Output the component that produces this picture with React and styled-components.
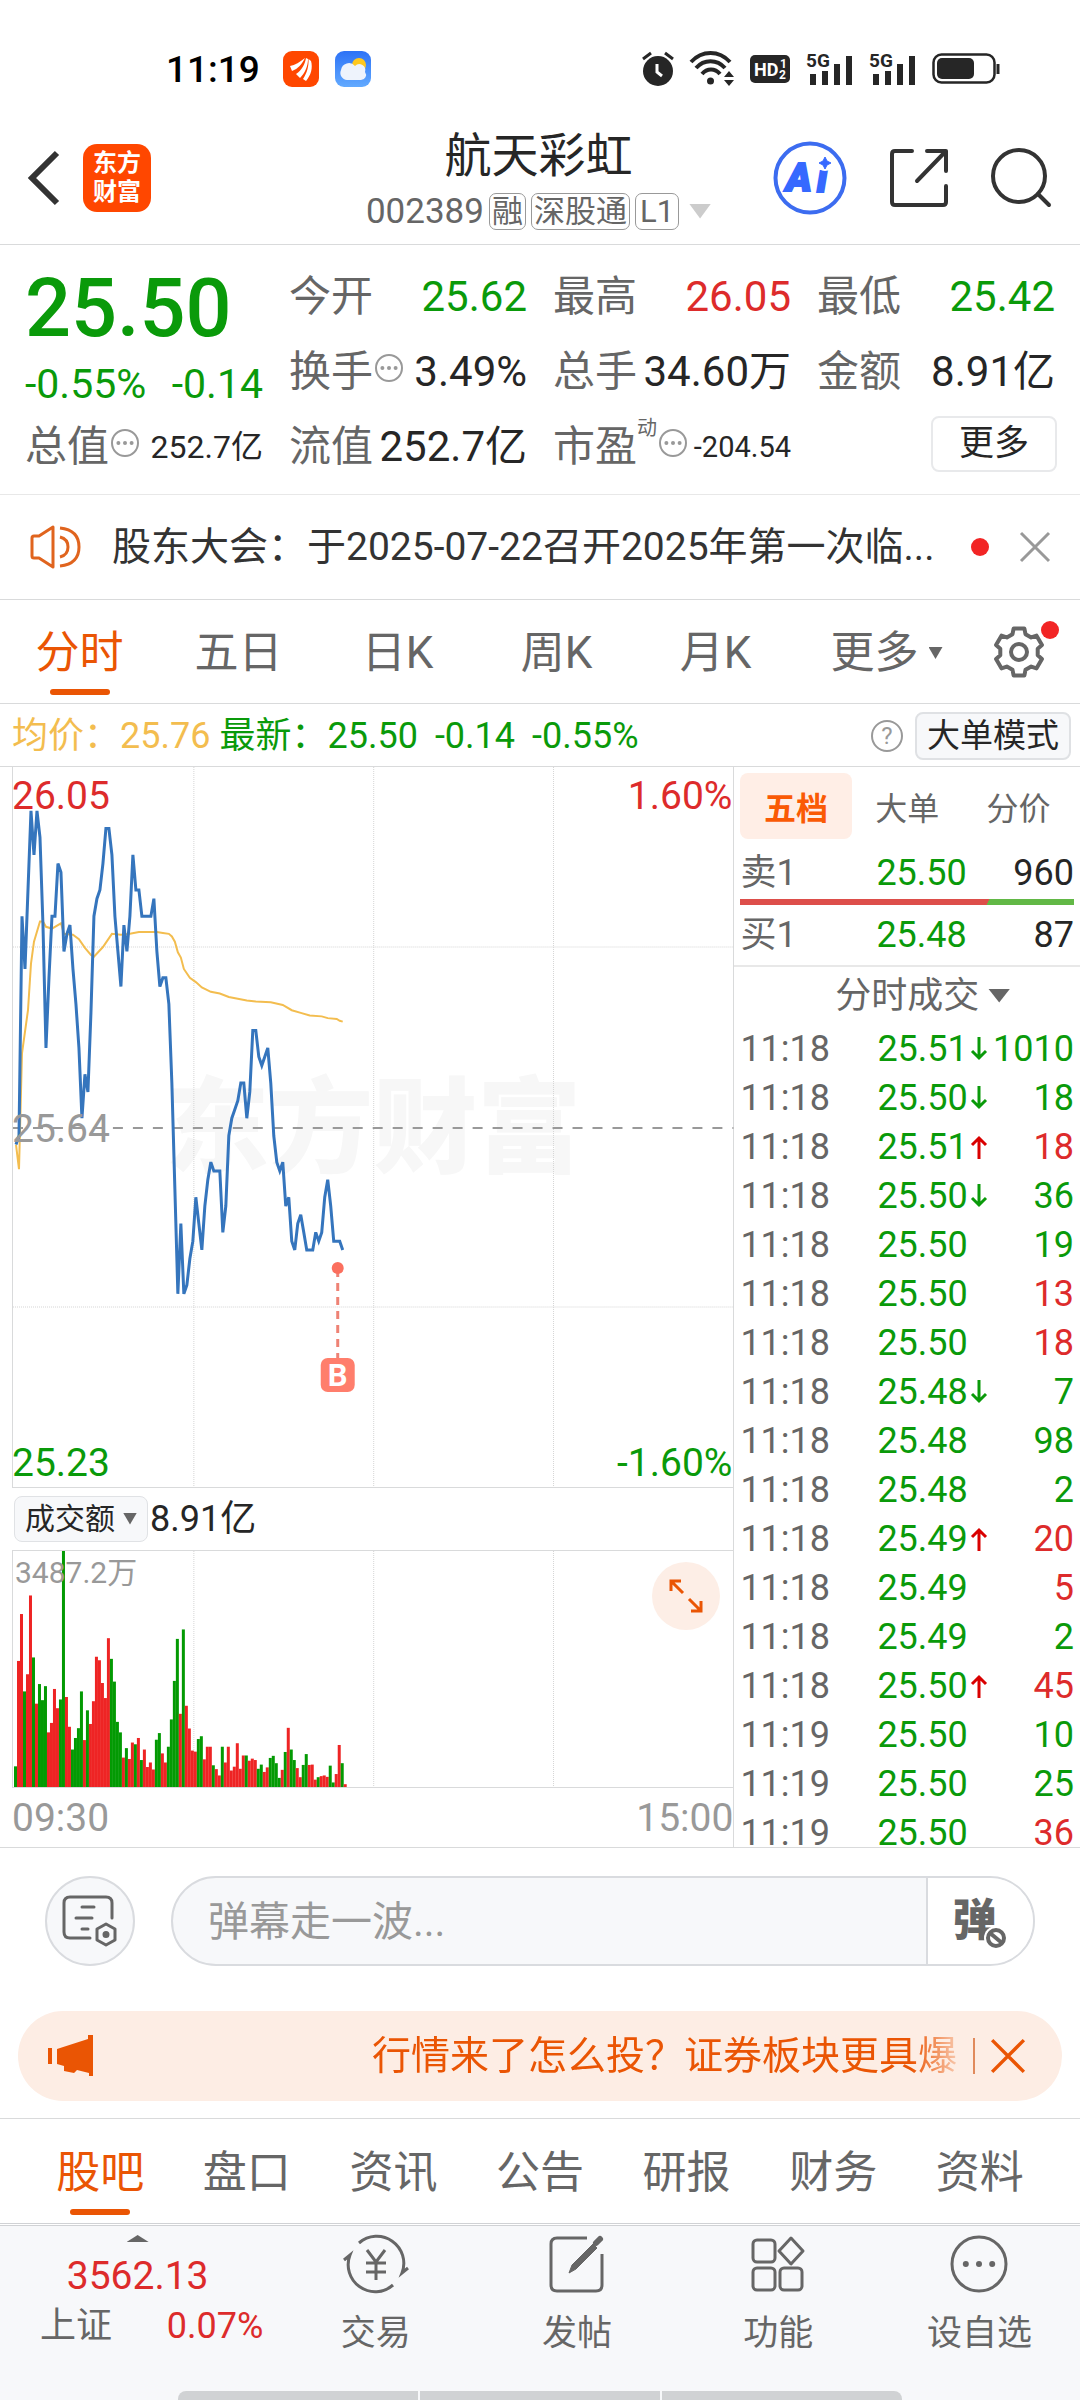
import styled, { createGlobalStyle, css } from "styled-components";

const red = "#dd2b2b";
const green = "#0a9a0a";
const orange = "#ea5504";
const line = "#d9dadb";

// 09:30 - 11:19, distance to the previous close in cents
const prevClose = 25.64;
const prices = [
  -2, -1, 24, 18, 27, 36, 31, 36, 33, 23, 9, 17, 24, 24, 30, 29, 20, 22, 23, 18,
  14, 9, 1, 6, 4, 13, 24, 26, 27, 30, 34, 34, 31, 24, 20, 16, 23, 20, 24, 31,
  27, 27, 24, 24, 24, 24, 26, 20, 16, 17, 17, 14, 5, -7, -19, -11, -19, -18, -15, -13,
  -8, -11, -14, -9, -6, -4, -5, -5, -5, -12, -9, -1, 1, 2, 3, 5, 5, 1, 4, 11,
  11, 8, 7, 8, 9, 5, -1, -4, -5, -4, -9, -8, -13, -14, -11, -10, -12, -14, -14, -14,
  -12, -13, -12, -8, -6, -9, -13, -13, -13, -14,
];

// [minute, cents]
const average = [
  [0, -2], [1, -4.8], [2, 8.4], [4, 13.3], [5, 18.6], [6, 21.1], [8, 23.4], [9, 23.4],
  [10, 22.8], [12, 22.6], [13, 22.8], [15, 23.2], [16, 22], [19, 21.9], [21, 21.4],
  [23, 20.4], [25, 19.6], [26, 19.4], [29, 20.5], [32, 22], [35, 21.9], [38, 22],
  [41, 22.2], [47, 22.2], [49, 22.1], [51, 22], [52, 21.7], [53, 21.1], [54, 19.9],
  [55, 19.3], [56, 18], [58, 17], [60, 16.5], [62, 15.9], [65, 15.4], [68, 15.2],
  [71, 14.8], [74, 14.6], [77, 14.4], [80, 14.3], [85, 14.2], [89, 13.9], [92, 13.3],
  [95, 13], [98, 12.7], [102, 12.6], [104, 12.4], [107, 12.3], [108, 12.1], [109, 12],
];

// r = up, g = down
const volumes =
  "g59 r360 r494 g273 r322 r547 g370 r238 g294 g248 g288 r156 r183 r280 r225 g250 g674 r257 r172 g107 " +
  "g140 g168 g273 r134 g219 r180 r245 r372 r362 r297 r254 r425 g366 g301 g186 g156 r84 g111 r80 r127 " +
  "g122 r140 g77 r107 r57 r70 r50 g135 g154 r96 r70 g115 g193 g303 g423 r209 g450 r232 r167 r104 " +
  "r101 g137 g145 r79 r115 r115 g62 r51 r33 g115 r70 r115 r47 r58 r125 r52 r90 g90 r75 r81 " +
  "r77 g52 g64 r43 r56 g83 g89 g68 g26 r49 g100 r169 g107 g77 r54 r28 g63 g94 r63 r64 " +
  "r21 g28 r31 r33 r29 g61 g13 r37 r120 g68 r8";
const maxVolume = 674;

const trades = [
  ["11:18", "25.51", "down", "1010", "g"],
  ["11:18", "25.50", "down", "18", "g"],
  ["11:18", "25.51", "up", "18", "r"],
  ["11:18", "25.50", "down", "36", "g"],
  ["11:18", "25.50", "", "19", "g"],
  ["11:18", "25.50", "", "13", "r"],
  ["11:18", "25.50", "", "18", "r"],
  ["11:18", "25.48", "down", "7", "g"],
  ["11:18", "25.48", "", "98", "g"],
  ["11:18", "25.48", "", "2", "g"],
  ["11:18", "25.49", "up", "20", "r"],
  ["11:18", "25.49", "", "5", "r"],
  ["11:18", "25.49", "", "2", "g"],
  ["11:18", "25.50", "up", "45", "r"],
  ["11:19", "25.50", "", "10", "g"],
  ["11:19", "25.50", "", "25", "g"],
  ["11:19", "25.50", "", "36", "r"],
];

// STYLED COMPONENTS

const GlobalStyle = createGlobalStyle`
  * {
    box-sizing: border-box;
  }
  body {
    margin: 0;
    background: #fff;
    color: #262626;
    font-family: Roboto, "Noto Sans CJK SC", sans-serif;
  }
  button, input, select {
    margin: 0;
    padding: 0;
    border: 0;
    background: none;
    color: inherit;
    font: inherit;
  }
  svg {
    display: block;
    flex: none;
    overflow: visible;
  }
  table {
    border-collapse: collapse;
  }
`;

const Page = styled.div`
  display: flex;
  flex-direction: column;
  min-height: 100vh;
`;

const StatusBar = styled.div`
  display: flex;
  align-items: center;
  justify-content: space-between;
  height: 120px;
  padding: 18px 80px 0 166px;
`;
const StatusGroup = styled.div`
  display: flex;
  align-items: center;
  gap: 16px;
`;
const Clock = styled.span`
  margin-right: 7px;
  font-size: 37px;
  font-weight: 500;
  color: #000;
`;

const Header = styled.header`
  display: grid;
  grid-template-columns: 1fr auto 1fr;
  align-items: start;
  height: 125px;
  padding: 8px 29px 0 26px;
  border-bottom: 1px solid ${line};
`;
const HeaderSide = styled.div`
  display: flex;
  align-items: center;
  justify-content: ${({ $end }) => ($end ? "flex-end" : "flex-start")};
  gap: ${({ $end }) => ($end ? "43px" : "24px")};
  height: 100px;
`;
const IconButton = styled.button`
  display: grid;
  place-items: center;
  flex: none;
  cursor: pointer;
`;
const Logo = styled.span`
  display: grid;
  place-content: center;
  width: 68px;
  height: 68px;
  border-radius: 14px;
  background: #ff4700;
  color: #fff;
  font-size: 24px;
  font-weight: 700;
  line-height: 29px;
`;
const Heading = styled.div`
  text-align: center;
`;
const StockName = styled.h1`
  margin: 0;
  font-size: 47px;
  font-weight: 400;
  line-height: 56px;
`;
const StockCode = styled.div`
  display: flex;
  align-items: center;
  gap: 5px;
  height: 54px;
  font-size: 35px;
  color: #666;
`;
const Tag = styled.span`
  height: 37px;
  padding: 0 2px;
  border: 1px solid #999;
  border-radius: 7px;
  font-size: 31px;
  line-height: 35px;
  ${({ $wide }) => $wide && "padding: 0 4px;"}
`;
const Triangle = styled.span`
  display: inline-block;
  flex: none;
  width: ${({ $w }) => $w}px;
  height: ${({ $h }) => $h}px;
  margin-left: ${({ $gap }) => $gap || 0}px;
  background: ${({ $color }) => $color || "#666"};
  clip-path: ${({ $up }) =>
    $up ? "polygon(50% 0, 100% 100%, 0 100%)" : "polygon(0 0, 100% 0, 50% 100%)"};
`;

const Quote = styled.section`
  display: grid;
  grid-template-columns: repeat(4, 1fr);
  grid-auto-rows: 75px;
  column-gap: 26px;
  padding: 14px 25px 10px;
  border-bottom: 1px solid #e8e8e8;
`;
const PriceBlock = styled.div`
  grid-row: span 2;
  color: ${green};
`;
const Price = styled.div`
  font-size: 81px;
  font-weight: 500;
  line-height: 100px;
`;
const Change = styled.div`
  display: flex;
  justify-content: space-between;
  font-size: 41px;
  line-height: 50px;
`;
const Cell = styled.div`
  display: flex;
  align-items: center;
  justify-content: space-between;
  font-size: 42px;
  line-height: 50px;
  white-space: nowrap;
`;
const CellLabel = styled.span`
  display: flex;
  align-items: center;
  color: #666;
  svg {
    margin: 0 0 8px 1px;
  }
`;
const Sup = styled.span`
  align-self: flex-start;
  margin-top: -6px;
  font-size: 20px;
  line-height: 24px;
`;
const CellValue = styled.span`
  color: ${({ $color }) => $color || "#262626"};
  font-size: ${({ $size }) => $size || 42}px;
`;
const MoreButton = styled.button`
  width: 126px;
  height: 56px;
  margin: 0 -2px 6px auto;
  border: 2px solid #e8e9eb;
  border-radius: 8px;
  font-size: 35px;
  line-height: 52px;
`;

const Notice = styled.section`
  display: flex;
  align-items: center;
  height: 105px;
  padding: 0 30px;
  border-bottom: 1px solid ${line};
`;
const NoticeText = styled.a`
  flex: 1;
  min-width: 0;
  margin: 0 40px 0 31px;
  color: #333;
  font-size: 39px;
  line-height: 46px;
  text-decoration: none;
  white-space: nowrap;
`;
const RedDot = styled.i`
  width: 18px;
  height: 18px;
  border-radius: 50%;
  background: #f22525;
`;
const NoticeClose = styled(IconButton)`
  margin-left: 31px;
`;

const Tabs = styled.nav`
  display: flex;
  height: 104px;
  border-bottom: 1px solid ${line};
`;
const Tab = styled.button`
  position: relative;
  flex: ${({ $grow }) => $grow || 159} 1 0;
  display: flex;
  align-items: center;
  justify-content: center;
  padding-top: 3px;
  color: ${({ $active }) => ($active ? orange : "#666")};
  font-size: 44px;
  line-height: 52px;
  cursor: pointer;
  ${({ $active }) =>
    $active &&
    css`
      &::after {
        content: "";
        position: absolute;
        bottom: 8px;
        width: 60px;
        height: 6px;
        border-radius: 3px;
        background: ${orange};
      }
    `}
`;
const SettingsTab = styled(Tab)`
  padding: 0;
  svg {
    margin-right: 20px;
  }
`;
const TabDot = styled(RedDot)`
  position: absolute;
  top: 21px;
  right: 21px;
`;
const BoardTabs = styled(Tabs)`
  height: 108px;
  padding: 1px 27px 0;
  border-top: 1px solid ${line};
  border-bottom: 3px double #d0d2d5;
`;

const InfoRow = styled.div`
  display: flex;
  align-items: center;
  height: 63px;
  padding: 1px 9px 0 12px;
  border-bottom: 1px solid ${line};
  font-size: 36px;
  line-height: 44px;
  white-space: nowrap;
`;
const InfoItem = styled.span`
  margin-right: ${({ $gap }) => $gap}px;
  color: ${({ $color }) => $color || green};
`;
const InfoEnd = styled.div`
  display: flex;
  align-items: center;
  gap: 11px;
  margin-left: auto;
`;
const ModeButton = styled.button`
  height: 48px;
  padding: 0 10px;
  border: 2px solid #dfe1e4;
  border-radius: 8px;
  background: #f7f8fa;
  font-size: 33px;
  line-height: 44px;
`;

const Market = styled.section`
  display: grid;
  grid-template-columns: 68fr 32fr;
  border-bottom: 1px solid ${line};
`;
const Charts = styled.div`
  display: flex;
  flex-direction: column;
  padding-left: 12px;
  border-right: 1px solid ${line};
`;
const ChartBox = styled.div`
  position: relative;
  height: ${({ $h }) => $h}px;
  border-left: 1px solid ${line};
  border-bottom: 1px solid ${line};
  ${({ $top }) => $top && `border-top: 1px solid ${line};`}
`;
const ChartSvg = styled.svg`
  position: absolute;
  inset: 0;
  width: 100%;
  height: 100%;
`;
const ChartLabel = styled.span`
  position: absolute;
  font-size: ${({ $size }) => $size || 39}px;
  line-height: 46px;
  color: ${({ $color }) => $color};
  ${({ $at }) => $at}
`;
const Watermark = styled.span`
  position: absolute;
  top: 50%;
  left: 0;
  right: 0;
  margin-top: -71px;
  color: #f7f7f7;
  font-size: 104px;
  font-weight: 900;
  line-height: 148px;
  text-align: center;
`;
const VolumeHead = styled.div`
  display: flex;
  align-items: center;
  gap: 2px;
  height: 62px;
  padding: 0 0 1px 2px;
  font-size: 36px;
  line-height: 44px;
`;
const VolumePicker = styled.label`
  display: flex;
  align-items: center;
  height: 46px;
  padding: 0 10px;
  border: 1px solid #e0e2e5;
  border-radius: 8px;
  background: #f7f8fa;
`;
const PlainSelect = styled.select`
  appearance: none;
  font-size: ${({ $size }) => $size}px;
  color: ${({ $color }) => $color};
`;
const ExpandButton = styled(IconButton)`
  position: absolute;
  right: 13px;
  top: 11px;
  width: 68px;
  height: 68px;
  border-radius: 50%;
  background: #fdeee6;
`;
const TimeAxis = styled.div`
  display: flex;
  align-items: center;
  justify-content: space-between;
  height: 59px;
  color: #999;
  font-size: 39px;
`;

const Side = styled.aside`
  display: flex;
  flex-direction: column;
  padding-top: 6px;
`;
const SideTabs = styled.div`
  display: flex;
  margin: 0 6px 7px;
`;
const SideTab = styled.button`
  flex: 1;
  height: 66px;
  border-radius: 8px;
  color: #666;
  font-size: 32px;
  ${({ $active }) =>
    $active &&
    css`
      background: #ffeee6;
      color: #fa5a05;
      font-weight: 700;
    `}
`;
const DealTable = styled.table`
  width: calc(100% - 12px);
  margin: 0 6px;
  table-layout: fixed;
  font-size: 36px;
  line-height: 44px;
`;
const DealRow = styled.tr`
  height: ${({ $h }) => $h || 49}px;
`;
const DealCell = styled.td`
  width: ${({ $w }) => ($w ? `${$w}px` : "auto")};
  padding: 0;
  color: ${({ $color }) => $color || "#666"};
  text-align: ${({ $right }) => ($right ? "right" : "left")};
  svg {
    margin-left: 3px;
  }
`;
const RatioBar = styled.div`
  height: 6px;
  margin: 0 6px;
  background: linear-gradient(120deg, #dd4e4a 74%, #62b846 74%);
`;
const DealTitle = styled.label`
  display: flex;
  align-items: center;
  justify-content: center;
  height: 59px;
  padding-left: 31px;
  border-top: 2px solid #e8e8e8;
`;
const DealList = styled.div`
  flex: 1 1 0;
  min-height: 0;
`;

const Comment = styled.section`
  display: flex;
  gap: 36px;
  padding: 28px 45px 0;
`;
const RoundButton = styled(IconButton)`
  width: 90px;
  height: 90px;
  border: 2px solid #d9dbdf;
  border-radius: 50%;
  background: #f7f8fa;
`;
const CommentBox = styled.div`
  flex: 1;
  display: flex;
  height: 90px;
  border: 2px solid #d9dbdf;
  border-radius: 45px;
  background: #f7f8fa;
  overflow: hidden;
`;
const CommentInput = styled.input`
  flex: 1;
  min-width: 0;
  padding: 2px 36px 0 35px;
  font-size: 41px;
  &::placeholder {
    color: #999;
    opacity: 1;
  }
`;
const BarrageButton = styled.button`
  position: relative;
  width: 107px;
  border-left: 2px solid #d9dbdf;
  background: #fff;
  color: #666;
  font-size: 44px;
  font-weight: 900;
  line-height: 80px;
  padding-right: 12px;
  svg {
    position: absolute;
    left: 56px;
    top: 48px;
  }
`;

const Banner = styled.section`
  display: flex;
  align-items: center;
  height: 90px;
  margin: 45px 18px 17px;
  padding: 0 37px 0 29px;
  border-radius: 45px;
  background: #fdede4;
  color: ${orange};
`;
const BannerText = styled.a`
  flex: 1;
  min-width: 0;
  overflow: hidden;
  color: inherit;
  font-size: 39px;
  line-height: 60px;
  text-align: right;
  text-decoration: none;
  white-space: nowrap;
  mask-image: linear-gradient(to left, rgba(0, 0, 0, 0.25), #000 46px);
`;
const BannerRule = styled.i`
  width: 2px;
  height: 36px;
  margin: 0 16px;
  background: #e08a5c;
`;

const BottomBar = styled.footer`
  flex: 1;
  display: flex;
  flex-direction: column;
  justify-content: space-between;
  background: #f7f8fa;
`;
const BottomNav = styled.nav`
  display: grid;
  grid-template-columns: 275fr repeat(4, 201fr);
`;
const IndexLink = styled.a`
  display: flex;
  flex-direction: column;
  align-items: center;
  padding-top: 9px;
  color: ${red};
  font-size: 39px;
  line-height: 46px;
  text-decoration: none;
`;
const IndexValue = styled.span`
  margin-top: 11px;
`;
const IndexRow = styled.span`
  display: flex;
  align-self: stretch;
  justify-content: space-between;
  margin-top: 4px;
  padding: 0 12px 0 40px;
  font-size: 36px;
`;
const IndexName = styled.span`
  color: #666;
`;
const NavItem = styled.a`
  display: flex;
  flex-direction: column;
  align-items: center;
  gap: 10px;
  padding-top: 8px;
  color: #666;
  font-size: 35px;
  line-height: 60px;
  text-decoration: none;
`;
const HomeBar = styled.div`
  display: flex;
  gap: 2px;
  width: 67%;
  height: 9px;
  margin: 20px auto 0;
  border-radius: 8px 8px 0 0;
  overflow: hidden;
  i {
    flex: 1;
    background: #d0d2d4;
  }
`;

// ICONS

const AppIcon = () => (
  <svg width="36" height="36" viewBox="0 0 36 36">
    <rect width="36" height="36" rx="9" fill="#ff4700" />
    <path d="M7 15C12 14 17 11 22 7C19 13 15 18 9 20Z" fill="#fff" />
    <path d="M13 23C19 19 22 13 23 7L25 8C25 15 22 22 17 27Z" fill="#fff" />
    <path d="M20 28C24 22 26 15 25.500 8L28 10C30 17 28 24 23 30Z" fill="#fff" />
  </svg>
);

const WeatherIcon = () => (
  <svg width="36" height="36" viewBox="0 0 36 36">
    <defs>
      <linearGradient id="sky" x1="0" y1="0" x2="0" y2="1">
        <stop offset="0" stopColor="#2d72f6" />
        <stop offset="1" stopColor="#62aaff" />
      </linearGradient>
    </defs>
    <rect width="36" height="36" rx="9" fill="url(#sky)" />
    <circle cx="24" cy="14" r="7" fill="#ffc81e" />
    <path d="M12 29A7 7 0 0 1 6 19A8 8 0 0 1 20 15A6 6 0 0 1 30 21A5 5 0 0 1 26 29Z" fill="#eef3fc" />
  </svg>
);

const AlarmIcon = () => (
  <svg width="32" height="36" viewBox="0 0 32 36">
    <circle cx="16" cy="20" r="15" fill="#262626" />
    <path d="M1 8L9 2M31 8L23 2" stroke="#262626" strokeWidth="3" />
    <path d="M15 13V21L20 25" stroke="#fff" strokeWidth="3" fill="none" />
  </svg>
);

const WifiIcon = () => (
  <svg width="44" height="36" viewBox="0 0 44 36">
    <g fill="none" stroke="#262626" strokeWidth="4">
      <path d="M1 11C12 -1 29 -1 40 11" />
      <path d="M6 17C14 8 27 8 35 17" />
      <path d="M12 23C17 17 25 17 30 23" />
    </g>
    <circle cx="20.500" cy="30" r="3.500" fill="#262626" />
    <path d="M34 26L39 20L44 26ZM34 29H44L39 35Z" fill="#262626" />
  </svg>
);

const HdIcon = () => (
  <svg width="40" height="28" viewBox="0 0 40 28">
    <rect width="40" height="28" rx="5" fill="#262626" />
    <g fill="#fff" fontFamily="Roboto" fontWeight="700">
      <text x="4" y="21" fontSize="18">HD</text>
      <text x="30" y="13" fontSize="12">1</text>
      <text x="29" y="24" fontSize="12">2</text>
    </g>
  </svg>
);

const SignalIcon = () => (
  <svg width="47" height="34" viewBox="0 0 47 34">
    <text x="0" y="15" fontFamily="Roboto" fontWeight="700" fontSize="19" fill="#262626">5G</text>
    <path d="M7 22V33M19 19V33M31 12V33M43 4V33" stroke="#262626" strokeWidth="6" />
  </svg>
);

const BatteryIcon = () => (
  <svg width="68" height="32" viewBox="0 0 68 32">
    <rect x="1.500" y="1.500" width="61" height="28" rx="8" fill="none" stroke="#262626" strokeWidth="2.500" />
    <rect x="5" y="5" width="37" height="21" rx="5" fill="#262626" />
    <path d="M66 11V21" stroke="#262626" strokeWidth="3" />
  </svg>
);

const BackIcon = () => (
  <svg width="33" height="56" viewBox="0 0 33 56" fill="none" stroke="#333" strokeWidth="6">
    <path d="M31 3L6 28L31 53" />
  </svg>
);

const AiIcon = () => (
  <svg width="74" height="74" viewBox="0 0 74 74">
    <g fill="#3669ff" stroke="#3669ff" strokeWidth="2" fontFamily="Roboto" fontWeight="900" fontStyle="italic">
      <text x="13" y="50" fontSize="39">A</text>
      <text x="44" y="51" fontSize="38">i</text>
    </g>
    <circle cx="52" cy="22" r="8" fill="#fff" />
    <path d="M52 16L54 20L58 22L54 24L52 28L50 24L46 22L50 20Z" fill="#3669ff" stroke="#3669ff" strokeWidth="1" />
    <circle cx="37" cy="37" r="34.500" fill="none" stroke="#3c6cf0" strokeWidth="4" />
  </svg>
);

const ShareIcon = () => (
  <svg width="58" height="58" viewBox="0 0 58 58" fill="none" stroke="#333" strokeWidth="4" strokeLinecap="round" strokeLinejoin="round">
    <path d="M22 2H5Q2 2 2 5V53Q2 56 5 56H53Q56 56 56 53V37" />
    <path d="M37 2H56V22M56 2L27 32" />
  </svg>
);

const SearchIcon = () => (
  <svg width="60" height="60" viewBox="0 0 60 60" fill="none" stroke="#333" strokeWidth="4" strokeLinecap="round">
    <circle cx="28" cy="28" r="26" />
    <path d="M47 46L58 57" />
  </svg>
);

const DotsIcon = ({ size = 30, stroke = 2, color = "#999", dot = 2 }) => (
  <svg width={size} height={size} viewBox={`0 0 ${size} ${size}`}>
    <circle cx={size / 2} cy={size / 2} r={size / 2 - stroke} fill="none" stroke={color} strokeWidth={stroke} />
    {[-1, 0, 1].map((n) => (
      <circle key={n} cx={size / 2 + n * size * 0.22} cy={size / 2} r={dot} fill={color} />
    ))}
  </svg>
);

const SpeakerIcon = () => (
  <svg width="51" height="44" viewBox="0 0 51 44" fill="none" stroke="#e0641e" strokeWidth="3" strokeLinejoin="round">
    <path d="M9 11L23 2V42L9 33H4Q2 33 2 31V13Q2 11 4 11Z" />
    <path d="M30 12Q38 14 38 22T30 32M30 3Q49 5 49 22T30 41" />
  </svg>
);

const CloseIcon = ({ size, color, width = 3 }) => (
  <svg width={size} height={size} viewBox="0 0 30 30" stroke={color} strokeWidth={width}>
    <path d="M1 1L29 29M29 1L1 29" />
  </svg>
);

const gearPoints = [0, 60, 120, 180, 240, 300]
  .flatMap((a) => [[a - 20, 19], [a - 13, 24], [a + 13, 24], [a + 20, 19]])
  .map(([a, r]) => {
    const t = (a * Math.PI) / 180;
    return `${26 + r * Math.sin(t)},${26 - r * Math.cos(t)}`;
  })
  .join(" ");

const GearIcon = () => (
  <svg width="52" height="52" viewBox="0 0 52 52" fill="none" stroke="#666" strokeWidth="4" strokeLinejoin="round">
    <polygon points={gearPoints} />
    <circle cx="26" cy="26" r="8" />
  </svg>
);

const HelpIcon = () => (
  <svg width="34" height="34" viewBox="0 0 34 34">
    <circle cx="17" cy="17" r="15" fill="none" stroke="#999" strokeWidth="2" />
    <text x="17" y="25" textAnchor="middle" fontFamily="Roboto" fontSize="24" fill="#999">?</text>
  </svg>
);

const ArrowIcon = ({ up }) => (
  <svg width="18" height="24" viewBox="0 0 18 24" fill="none" stroke={up ? "#d90000" : green} strokeWidth="3">
    <path d={up ? "M9 24V3M2 10L9 3L16 10" : "M9 0V21M2 14L9 21L16 14"} />
  </svg>
);

const ExpandIcon = () => (
  <svg width="34" height="34" viewBox="0 0 34 34" fill="none" stroke={orange} strokeWidth="3">
    <path d="M2 12V2H12M2 2L14 14M32 22V32H22M32 32L20 20" />
  </svg>
);

const PanelIcon = () => (
  <svg width="56" height="52" viewBox="0 0 56 52" fill="none" stroke="#666" strokeWidth="3" strokeLinecap="round">
    <path d="M28 43H8Q2 43 2 37V8Q2 2 8 2H44Q50 2 50 8V23" />
    <path d="M20 12H32M14 23H30M20 34H26" />
    <path d="M44 29L53 34V45L44 50L35 45V34Z" strokeLinejoin="round" />
    <circle cx="44" cy="39.500" r="2" fill="#666" />
  </svg>
);

const BanIcon = () => (
  <svg width="24" height="24" viewBox="0 0 24 24">
    <circle cx="12" cy="12" r="12" fill="#fff" />
    <g fill="none" stroke="#666" strokeWidth="4">
      <circle cx="12" cy="12" r="8" />
      <path d="M6 7L18 17" />
    </g>
  </svg>
);

const HornIcon = () => (
  <svg width="48" height="42" viewBox="0 0 48 42" fill={orange}>
    <path d="M1 13H5V29H1ZM10 14L41 4V0H46V41H42V38L30 35L27 38L17 36V31L10 29Z" />
  </svg>
);

const TradeIcon = () => (
  <svg width="64" height="60" viewBox="0 0 64 60" fill="none" stroke="#666" strokeWidth="3">
    <path d="M15 9A27 27 0 0 1 58 39L64 34M49 51A27 27 0 0 1 6 21L0 26" />
    <path d="M23 16L32 28L41 16M22 29H42M22 38H42M32 28V46" />
  </svg>
);

const PostIcon = () => (
  <svg width="56" height="60" viewBox="0 0 56 60" fill="none" stroke="#666" strokeWidth="3">
    <path d="M38 4H8Q2 4 2 10V51Q2 57 8 57H47Q53 57 53 51V20" />
    <path d="M20 39L23 31L44 10L48 14L27 35Z" fill="#666" strokeWidth="1" />
    <path d="M47 9L51 5" strokeWidth="6" strokeLinecap="round" />
  </svg>
);

const GridIcon = () => (
  <svg width="54" height="60" viewBox="0 0 54 60" fill="none" stroke="#666" strokeWidth="3" strokeLinejoin="round">
    <rect x="2" y="6" width="22" height="22" rx="4" />
    <rect x="2" y="34" width="22" height="22" rx="4" />
    <rect x="29" y="34" width="22" height="22" rx="4" />
    <path d="M40 4L52 17L40 30L28 17Z" />
  </svg>
);

// CHARTS

const toX = (minute) => (minute + 1) * 3;
const toY = (cents) => ((26.05 - prevClose - cents / 100) / 0.82) * 720;

const GridLines = ({ height, rows }) => (
  <g stroke="#d5d5d5" strokeDasharray="1 1">
    {[181, 361, 541].map((x) => (
      <line key={x} x1={x} x2={x} y1="0" y2={height} />
    ))}
    {rows.map((y) => (
      <line key={y} x1="0" x2="721" y1={y} y2={y} />
    ))}
  </g>
);

const PriceChart = () => (
  <ChartBox $h={721}>
    <Watermark>东方财富</Watermark>
    <ChartSvg viewBox="0 0 721 720" preserveAspectRatio="none">
      <GridLines height={720} rows={[180, 540]} />
      <line x1="0" x2="721" y1="361" y2="361" stroke="#999" strokeWidth="2" strokeDasharray="10 10" />
      <polyline
        points={average.map(([m, c]) => `${toX(m)},${toY(c)}`).join(" ")}
        fill="none"
        stroke="#f3bd4f"
        strokeWidth="2"
      />
      <polyline
        points={prices.map((c, m) => `${toX(m)},${toY(c)}`).join(" ")}
        fill="none"
        stroke="#3575bd"
        strokeWidth="3"
      />
      <line x1="325" x2="325" y1="502" y2="592" stroke="#ee8275" strokeWidth="3" strokeDasharray="8 6" />
      <circle cx="325" cy="501" r="6" fill="#fb6f5e" />
      <rect x="308" y="591" width="34" height="34" rx="7" fill="#ff7e6c" />
      <text x="325" y="619" textAnchor="middle" fontFamily="Roboto" fontSize="31" fontWeight="700" fill="#fff">B</text>
    </ChartSvg>
    <ChartLabel $color={red} $at="top: 6px; left: -1px;">26.05</ChartLabel>
    <ChartLabel $color={red} $at="top: 6px; right: 1px;">1.60%</ChartLabel>
    <ChartLabel $color="#999" $at="top: 339px; left: -1px;">25.64</ChartLabel>
    <ChartLabel $color={green} $at="bottom: 1px; left: -1px;">25.23</ChartLabel>
    <ChartLabel $color={green} $at="bottom: 1px; right: 1px;">-1.60%</ChartLabel>
  </ChartBox>
);

const VolumeChart = () => (
  <ChartBox $h={238} $top>
    <ChartSvg viewBox="0 0 721 236" preserveAspectRatio="none">
      <GridLines height={236} rows={[]} />
      {volumes.split(" ").map((v, m) => {
        const h = (Number(v.slice(1)) / maxVolume) * 236;
        return (
          <rect key={m} x={toX(m) - 2} y={236 - h} width="3" height={h} fill={v[0] === "r" ? "#ee2424" : "#039a03"} />
        );
      })}
    </ChartSvg>
    <ChartLabel $size={30} $color="#999" $at="top: -1px; left: 2px;">3487.2万</ChartLabel>
    <ExpandButton aria-label="全屏"><ExpandIcon /></ExpandButton>
  </ChartBox>
);

const QuoteCell = ({ label, value, color, size, info, sup }) => (
  <Cell>
    <CellLabel>
      {label}
      {sup && <Sup>{sup}</Sup>}
      {info && <DotsIcon />}
    </CellLabel>
    <CellValue $color={color} $size={size}>{value}</CellValue>
  </Cell>
);

const BookRow = ({ name, price, amount, height }) => (
  <DealTable>
    <tbody>
      <DealRow $h={height}>
        <DealCell $w={136}>{name}</DealCell>
        <DealCell $w={92} $color={green}>{price}</DealCell>
        <DealCell $right $color="#262626">{amount}</DealCell>
      </DealRow>
    </tbody>
  </DealTable>
);

const App = () => {
  return (
    <Page>
      <GlobalStyle />
      <StatusBar>
        <StatusGroup>
          <Clock>11:19</Clock>
          <AppIcon />
          <WeatherIcon />
        </StatusGroup>
        <StatusGroup>
          <AlarmIcon />
          <WifiIcon />
          <HdIcon />
          <SignalIcon />
          <SignalIcon />
          <BatteryIcon />
        </StatusGroup>
      </StatusBar>

      <Header>
        <HeaderSide>
          <IconButton aria-label="返回"><BackIcon /></IconButton>
          <Logo>
            <span>东方</span>
            <span>财富</span>
          </Logo>
        </HeaderSide>
        <Heading>
          <StockName>航天彩虹</StockName>
          <StockCode>
            002389
            <Tag>融</Tag>
            <Tag>深股通</Tag>
            <Tag $wide>L1</Tag>
            <Triangle $w={22} $h={15} $gap={5} $color="#ccc" />
          </StockCode>
        </Heading>
        <HeaderSide $end>
          <IconButton aria-label="智能助手"><AiIcon /></IconButton>
          <IconButton aria-label="分享"><ShareIcon /></IconButton>
          <IconButton aria-label="搜索"><SearchIcon /></IconButton>
        </HeaderSide>
      </Header>

      <Quote>
        <PriceBlock>
          <Price>25.50</Price>
          <Change>
            <span>-0.55%</span>
            <span>-0.14</span>
          </Change>
        </PriceBlock>
        <QuoteCell label="今开" value="25.62" color={green} />
        <QuoteCell label="最高" value="26.05" color={red} />
        <QuoteCell label="最低" value="25.42" color={green} />
        <QuoteCell label="换手" value="3.49%" info />
        <QuoteCell label="总手" value="34.60万" />
        <QuoteCell label="金额" value="8.91亿" />
        <QuoteCell label="总值" value="252.7亿" size={32} info />
        <QuoteCell label="流值" value="252.7亿" />
        <QuoteCell label="市盈" value="-204.54" size={29} sup="动" info />
        <Cell>
          <MoreButton>更多</MoreButton>
        </Cell>
      </Quote>

      <Notice>
        <SpeakerIcon />
        <NoticeText href="#notice">股东大会：于2025-07-22召开2025年第一次临...</NoticeText>
        <RedDot />
        <NoticeClose aria-label="关闭"><CloseIcon size={30} color="#999" /></NoticeClose>
      </Notice>

      <Tabs>
        <Tab $active>分时</Tab>
        <Tab>五日</Tab>
        <Tab>日K</Tab>
        <Tab>周K</Tab>
        <Tab>月K</Tab>
        <Tab $grow={183}>
          更多
          <Triangle $w={14} $h={12} $gap={10} />
        </Tab>
        <SettingsTab $grow={102} aria-label="设置">
          <GearIcon />
          <TabDot />
        </SettingsTab>
      </Tabs>

      <InfoRow>
        <InfoItem $color="#f3bd4f" $gap={9}>均价：25.76</InfoItem>
        <InfoItem $gap={17}>最新：25.50</InfoItem>
        <InfoItem $gap={17}>-0.14</InfoItem>
        <InfoItem $gap={0}>-0.55%</InfoItem>
        <InfoEnd>
          <IconButton aria-label="帮助"><HelpIcon /></IconButton>
          <ModeButton>大单模式</ModeButton>
        </InfoEnd>
      </InfoRow>

      <Market>
        <Charts>
          <PriceChart />
          <VolumeHead>
            <VolumePicker>
              <PlainSelect $size={30} $color="#262626" aria-label="指标">
                <option>成交额</option>
              </PlainSelect>
              <Triangle $w={14} $h={12} $gap={8} />
            </VolumePicker>
            <span>8.91亿</span>
          </VolumeHead>
          <VolumeChart />
          <TimeAxis>
            <span>09:30</span>
            <span>15:00</span>
          </TimeAxis>
        </Charts>
        <Side>
          <SideTabs>
            <SideTab $active>五档</SideTab>
            <SideTab>大单</SideTab>
            <SideTab>分价</SideTab>
          </SideTabs>
          <BookRow name="卖1" price="25.50" amount="960" height={53} />
          <RatioBar />
          <BookRow name="买1" price="25.48" amount="87" height={60} />
          <DealTitle>
            <PlainSelect $size={36} $color="#666" aria-label="成交明细">
              <option>分时成交</option>
            </PlainSelect>
            <Triangle $w={22} $h={14} $gap={8} />
          </DealTitle>
          <DealList>
            <DealTable>
              <tbody>
                {trades.map(([time, price, arrow, amount, side], index) => (
                  <DealRow key={index}>
                    <DealCell $w={137}>{time}</DealCell>
                    <DealCell $w={90} $color={green}>{price}</DealCell>
                    <DealCell $w={21}>{arrow && <ArrowIcon up={arrow === "up"} />}</DealCell>
                    <DealCell $right $color={side === "r" ? red : green}>{amount}</DealCell>
                  </DealRow>
                ))}
              </tbody>
            </DealTable>
          </DealList>
        </Side>
      </Market>

      <Comment>
        <RoundButton aria-label="弹幕设置"><PanelIcon /></RoundButton>
        <CommentBox>
          <CommentInput aria-label="弹幕" placeholder="弹幕走一波..." />
          <BarrageButton>
            弹
            <BanIcon />
          </BarrageButton>
        </CommentBox>
      </Comment>

      <Banner>
        <HornIcon />
        <BannerText href="#topic">行情来了怎么投？证券板块更具爆</BannerText>
        <BannerRule />
        <IconButton aria-label="关闭"><CloseIcon size={34} color={orange} /></IconButton>
      </Banner>

      <BoardTabs>
        <Tab $active>股吧</Tab>
        <Tab>盘口</Tab>
        <Tab>资讯</Tab>
        <Tab>公告</Tab>
        <Tab>研报</Tab>
        <Tab>财务</Tab>
        <Tab>资料</Tab>
      </BoardTabs>

      <BottomBar>
        <BottomNav>
          <IndexLink href="#index">
            <Triangle $up $w={22} $h={7} />
            <IndexValue>3562.13</IndexValue>
            <IndexRow>
              <IndexName>上证</IndexName>
              <span>0.07%</span>
            </IndexRow>
          </IndexLink>
          <NavItem href="#trade"><TradeIcon />交易</NavItem>
          <NavItem href="#post"><PostIcon />发帖</NavItem>
          <NavItem href="#features"><GridIcon />功能</NavItem>
          <NavItem href="#watch"><DotsIcon size={60} stroke={3} color="#666" dot={3} />设自选</NavItem>
        </BottomNav>
        <HomeBar>
          <i />
          <i />
          <i />
        </HomeBar>
      </BottomBar>
    </Page>
  );
};

export default App;
